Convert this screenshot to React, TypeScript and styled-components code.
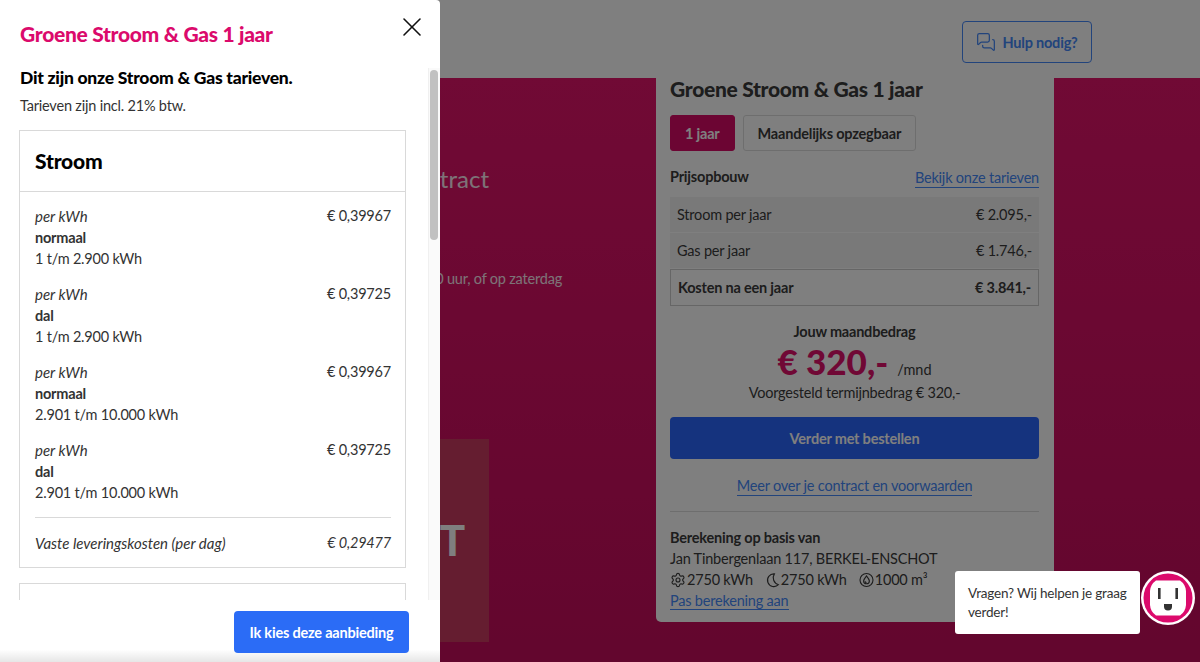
import styled, { createGlobalStyle } from "styled-components";
import { MessagesSquare, Settings, X } from "lucide-react";

const TARIFFS = [
  { label: "normaal", range: "1 t/m 2.900 kWh", price: "€ 0,39967" },
  { label: "dal", range: "1 t/m 2.900 kWh", price: "€ 0,39725" },
  { label: "normaal", range: "2.901 t/m 10.000 kWh", price: "€ 0,39967" },
  { label: "dal", range: "2.901 t/m 10.000 kWh", price: "€ 0,39725" },
];

export default function App() {
  return <Screen>
    <GlobalStyle />

    <Page>
      <Header>
        <HelpButton><MessagesSquare size={20} strokeWidth={1.5} /> Hulp nodig?</HelpButton>
      </Header>
      <Hero>
        <HeroText>
          <HeroHeading>Jouw contract</HeroHeading>
          <HeroNote>Bel ons tussen 09:00 en 17:00 uur, of op zaterdag</HeroNote>
          <Promo>ST</Promo>
        </HeroText>
        <Card>
          <CardTitle>Groene Stroom &amp; Gas 1 jaar</CardTitle>
          <Toggle>
            <ToggleButton $active>1 jaar</ToggleButton>
            <ToggleButton>Maandelijks opzegbaar</ToggleButton>
          </Toggle>
          <PriceHead>
            <strong>Prijsopbouw</strong>
            <TextLink>Bekijk onze tarieven</TextLink>
          </PriceHead>
          <PriceTable>
            <PriceRow><span>Stroom per jaar</span><span>€ 2.095,-</span></PriceRow>
            <PriceRow><span>Gas per jaar</span><span>€ 1.746,-</span></PriceRow>
            <PriceRow $total><span>Kosten na een jaar</span><span>€ 3.841,-</span></PriceRow>
          </PriceTable>
          <Monthly>
            <MonthlyLabel>Jouw maandbedrag</MonthlyLabel>
            <MonthlyAmount>€ 320,-<small>/mnd</small></MonthlyAmount>
            <MonthlyNote>Voorgesteld termijnbedrag € 320,-</MonthlyNote>
          </Monthly>
          <OrderButton>Verder met bestellen</OrderButton>
          <CenterLink><TextLink>Meer over je contract en voorwaarden</TextLink></CenterLink>
          <Rule />
          <Basis>
            <strong>Berekening op basis van</strong>
            <span>Jan Tinbergenlaan 117, BERKEL-ENSCHOT</span>
            <Usage>
              <UsageItem><Settings size={16} strokeWidth={1.7} /> 2750 kWh</UsageItem>
              <UsageItem><MoonIcon /> 2750 kWh</UsageItem>
              <UsageItem><DropIcon /> 1000 m³</UsageItem>
            </Usage>
            <div><BasisLink>Pas berekening aan</BasisLink></div>
          </Basis>
        </Card>
      </Hero>
    </Page>

    <Backdrop />

    <Drawer>
      <DrawerHead>
        <DrawerTitle>Groene Stroom &amp; Gas 1 jaar</DrawerTitle>
        <CloseButton><X size={32} strokeWidth={1.2} /></CloseButton>
      </DrawerHead>
      <DrawerBody>
        <ScrollTrack />
        <ScrollThumb />
        <Lead>Dit zijn onze Stroom &amp; Gas tarieven.</Lead>
        <SubLead>Tarieven zijn incl. 21% btw.</SubLead>
        <TariffBox>
          <TariffTitle>Stroom</TariffTitle>
          <TariffList>
            {TARIFFS.map((t, i) => <TariffRow key={i}>
              <div>
                <em>per kWh</em>
                <strong>{t.label}</strong>
                <span>{t.range}</span>
              </div>
              <span>{t.price}</span>
            </TariffRow>)}
            <FixedRow><em>Vaste leveringskosten (per dag)</em><span>€ 0,29477</span></FixedRow>
          </TariffList>
        </TariffBox>
        <TariffBox />
      </DrawerBody>
      <DrawerFoot>
        <ChooseButton>Ik kies deze aanbieding</ChooseButton>
      </DrawerFoot>
    </Drawer>

    <Chat>
      <ChatBubble>Vragen? Wij helpen je graag verder!</ChatBubble>
      <SocketIcon />
    </Chat>
  </Screen>;
}

function MoonIcon() {
  return <svg width="15" height="16" viewBox="0 0 24 24" fill="none" stroke="currentColor" strokeWidth="1.8">
    <path d="M15 2.2A10.2 10.2 0 1 0 21.5 19.5 11.5 11.5 0 0 1 15 2.2z" />
  </svg>;
}

function DropIcon() {
  return <svg width="15" height="16" viewBox="0 0 24 24" fill="none" stroke="currentColor" strokeWidth="1.8">
    <circle cx="12" cy="12" r="10.400" />
    <path d="M12 5.500c2.600 3.200 4.600 5.600 4.600 8a4.600 4.600 0 0 1-9.200 0c0-2.400 2-4.800 4.600-8z" />
    <path d="M9.800 14a2.300 2.300 0 0 0 2.200 2.200" />
  </svg>;
}

function SocketIcon() {
  return <svg width="54" height="54" viewBox="0 0 54 54">
    <circle cx="27" cy="27" r="27" fill="#fff" />
    <circle cx="27" cy="27" r="24.500" fill="#dc0a6c" />
    <path d="M15 9.500h24a14 14 0 0 1 6 10.500v14a14 14 0 0 1-6 10.500H15a14 14 0 0 1-6-10.500V20a14 14 0 0 1 6-10.500z" fill="#fff" />
    <rect x="17" y="17" width="2.600" height="11" fill="#333" />
    <rect x="34.400" y="17" width="2.600" height="11" fill="#333" />
    <path d="M23 33h8v2.500a4 4 0 0 1-8 0z" fill="#333" />
  </svg>;
}

const GlobalStyle = createGlobalStyle`
  html, body {
    margin: 0;
    padding: 0;
    font-family: "Lato", "Liberation Sans", sans-serif;
  }
  * { box-sizing: border-box; }
  button { letter-spacing: inherit; }
`;

const Screen = styled.div`
  position: relative;
  width: 1200px;
  height: 662px;
  overflow: hidden;
  font-size: 14.5px;
  letter-spacing: -0.2px;
`;

const Page = styled.div`
  display: flex;
  flex-direction: column;
  height: 100%;
  background: #fff;
`;

const Header = styled.header`
  flex: none;
  height: 78px;
  display: flex;
  align-items: center;
  justify-content: flex-end;
  padding: 6px 108px 0 0;
  background: #fff;
`;

const HelpButton = styled.button`
  display: flex;
  align-items: center;
  justify-content: center;
  gap: 6px;
  height: 42px;
  width: 130px;
  background: none;
  border: 1.5px solid #4488f8;
  border-radius: 4px;
  color: #4488f8;
  font: 700 14.5px "Lato", sans-serif;
`;

const Hero = styled.main`
  flex: 1;
  min-height: 0;
  display: flex;
  align-items: flex-start;
  background: linear-gradient(#e2146a, #c60c5c);
`;

const HeroText = styled.div`
  flex: none;
  width: 656px;
  display: flex;
  flex-direction: column;
  align-items: flex-end;
  color: #fff;
`;

const HeroHeading = styled.h1`
  margin: 86px 167px 0 0;
  font-size: 24px;
  line-height: 30px;
  font-weight: 400;
  letter-spacing: 0;
  opacity: 0.9;
`;

const HeroNote = styled.p`
  margin: 75px 94px 0 0;
  font-size: 14.5px;
  line-height: 20px;
  opacity: 0.9;
  white-space: nowrap;
`;

const Promo = styled.div`
  margin: 150px 167px 0 0;
  width: 150px;
  height: 203px;
  padding: 76px 24px 0 0;
  text-align: right;
  background: #ca3a60;
  font-size: 42px;
  line-height: 50px;
  font-weight: 900;
  letter-spacing: 0;
  color: #fff;
`;

const Card = styled.section`
  flex: none;
  width: 398px;
  height: 544px;
  padding: 0 15px 0 14px;
  background: #fff;
  border-radius: 0 0 5px 5px;
  color: #3a3a3a;
`;

const CardTitle = styled.h2`
  margin: 0;
  font-size: 21px;
  line-height: 22px;
  font-weight: 900;
  letter-spacing: -0.3px;
`;

const Toggle = styled.div`
  display: flex;
  gap: 8px;
  margin-top: 15px;
`;

const ToggleButton = styled.button<{ $active?: boolean }>`
  height: 36px;
  padding: 0 14px;
  border: 1px solid ${p => (p.$active ? "#d80a66" : "#ddd")};
  border-radius: 3px;
  background: ${p => (p.$active ? "#d80a66" : "#fff")};
  color: ${p => (p.$active ? "#fff" : "#3a3a3a")};
  font: 700 14.5px "Lato", sans-serif;
`;

const PriceHead = styled.div`
  display: flex;
  justify-content: space-between;
  align-items: flex-start;
  margin-top: 16px;
  line-height: 20px;
`;

const TextLink = styled.a`
  display: inline-block;
  margin-top: 2px;
  color: #4488f8;
  line-height: 18px;
  border-bottom: 1px solid #4488f8;
`;

const BasisLink = styled(TextLink)`
  margin-top: 0;
  line-height: 17px;
`;

const PriceTable = styled.div`
  display: flex;
  flex-direction: column;
  gap: 1px;
  margin-top: 9px;
`;

const PriceRow = styled.div<{ $total?: boolean }>`
  display: flex;
  justify-content: space-between;
  align-items: center;
  height: ${p => (p.$total ? 37 : 35)}px;
  padding: 0 7px;
  background: ${p => (p.$total ? "#fff" : "#f3f3f3")};
  border: ${p => (p.$total ? "1px solid #ccc" : "none")};
  font-weight: ${p => (p.$total ? 700 : 400)};
`;

const Monthly = styled.div`
  display: flex;
  flex-direction: column;
  align-items: center;
  margin-top: 16px;
`;

const MonthlyLabel = styled.div`
  font-weight: 700;
  line-height: 20px;
`;

const MonthlyAmount = styled.div`
  margin-top: -2px;
  color: #e0106a;
  font-size: 35px;
  line-height: 42px;
  font-weight: 900;
  letter-spacing: 0;

  small {
    margin-left: 9px;
    color: #3a3a3a;
    font-size: 14.5px;
    line-height: 1;
    font-weight: 400;
  }
`;

const MonthlyNote = styled.div`
  margin-top: 2px;
  line-height: 18px;
`;

const OrderButton = styled.button`
  display: block;
  width: 100%;
  height: 42px;
  margin-top: 15px;
  border: none;
  border-radius: 4px;
  background: #2a66fc;
  color: #fff;
  font: 700 14.5px "Lato", sans-serif;
`;

const CenterLink = styled.div`
  text-align: center;
  margin-top: 16px;
`;

const Rule = styled.hr`
  margin: 15px 0 0;
  border: none;
  border-top: 1px solid #ddd;
`;

const Basis = styled.div`
  display: flex;
  flex-direction: column;
  margin-top: 15px;
  line-height: 21px;
`;

const Usage = styled.div`
  display: flex;
  gap: 12px;
`;

const UsageItem = styled.span`
  display: flex;
  align-items: center;
  gap: 1px;
`;

const Backdrop = styled.div`
  position: absolute;
  inset: 0;
  background: rgba(0, 0, 0, 0.5);
`;

const Drawer = styled.aside`
  position: absolute;
  top: 0;
  left: 0;
  bottom: 0;
  width: 440px;
  display: flex;
  flex-direction: column;
  background: #fff;
  color: #333;
  border-radius: 0 4px 0 0;
`;

const DrawerHead = styled.div`
  flex: none;
  height: 68px;
  display: flex;
  justify-content: space-between;
  padding: 20px 12px 0 20px;
`;

const DrawerTitle = styled.h2`
  margin: 0;
  color: #db0a6c;
  font-size: 21px;
  line-height: 28px;
  font-weight: 900;
  letter-spacing: -0.3px;
`;

const CloseButton = styled.button`
  display: flex;
  width: 32px;
  height: 32px;
  align-items: center;
  justify-content: center;
  padding: 0;
  margin-top: -9px;
  border: none;
  background: none;
  color: #111;
`;

const DrawerBody = styled.div`
  position: relative;
  flex: 1;
  min-height: 0;
  overflow: hidden;
  padding: 0 34px 0 19px;
`;

const ScrollTrack = styled.div`
  position: absolute;
  top: 0;
  right: 0;
  bottom: 0;
  width: 12px;
  background: #fafafa;
  border-left: 1px solid #f0f0f0;
`;

const ScrollThumb = styled.div`
  position: absolute;
  top: 2px;
  right: 2px;
  width: 8px;
  height: 170px;
  background: #c1c1c1;
  border-radius: 4px;
`;

const Lead = styled.h3`
  margin: 0 0 0 1px;
  color: #000;
  font-size: 17.5px;
  line-height: 20px;
  font-weight: 900;
  letter-spacing: -0.25px;
`;

const SubLead = styled.p`
  margin: 8px 0 0 1px;
  line-height: 20px;
`;

const TariffBox = styled.section`
  width: 387px;
  min-height: 60px;
  border: 1px solid #d9d9d9;
  margin-top: 15px;

  &:first-of-type { margin-top: 14px; }
`;

const TariffTitle = styled.h4`
  margin: 0;
  height: 60px;
  padding: 0 15px 2px;
  display: flex;
  align-items: center;
  color: #000;
  font-size: 21px;
  font-weight: 900;
  letter-spacing: -0.2px;
`;

const TariffList = styled.div`
  border-top: 1px solid #d9d9d9;
  padding: 13px 14px 0 15px;
`;

const TariffRow = styled.div`
  display: flex;
  justify-content: space-between;
  height: 78px;
  line-height: 21px;

  > div {
    display: flex;
    flex-direction: column;
  }

  em {
    font-size: 15px;
    line-height: 22px;
    letter-spacing: 0;
  }
`;

const FixedRow = styled.div`
  display: flex;
  justify-content: space-between;
  align-items: center;
  height: 50px;
  border-top: 1px solid #d9d9d9;
  font-style: italic;

  em {
    font-size: 15px;
    letter-spacing: 0;
  }
`;

const DrawerFoot = styled.div`
  flex: none;
  height: 62px;
  display: flex;
  justify-content: flex-end;
  padding: 11px 31px 0 0;
  background: linear-gradient(#fff 80%, #e6e6e6);
`;

const ChooseButton = styled.button`
  width: 175px;
  height: 42px;
  border: none;
  border-radius: 4px;
  background: #2b6cf6;
  color: #fff;
  font: 700 14.5px "Lato", sans-serif;
`;

const Chat = styled.div`
  position: absolute;
  left: 955px;
  top: 571px;
  display: flex;
  align-items: flex-start;
  gap: 1px;
`;

const ChatBubble = styled.div`
  width: 185px;
  height: 63px;
  padding: 13px 8px 0 13px;
  background: #fff;
  border-radius: 3px;
  color: #333;
  font-size: 13.5px;
  line-height: 19px;
`;
